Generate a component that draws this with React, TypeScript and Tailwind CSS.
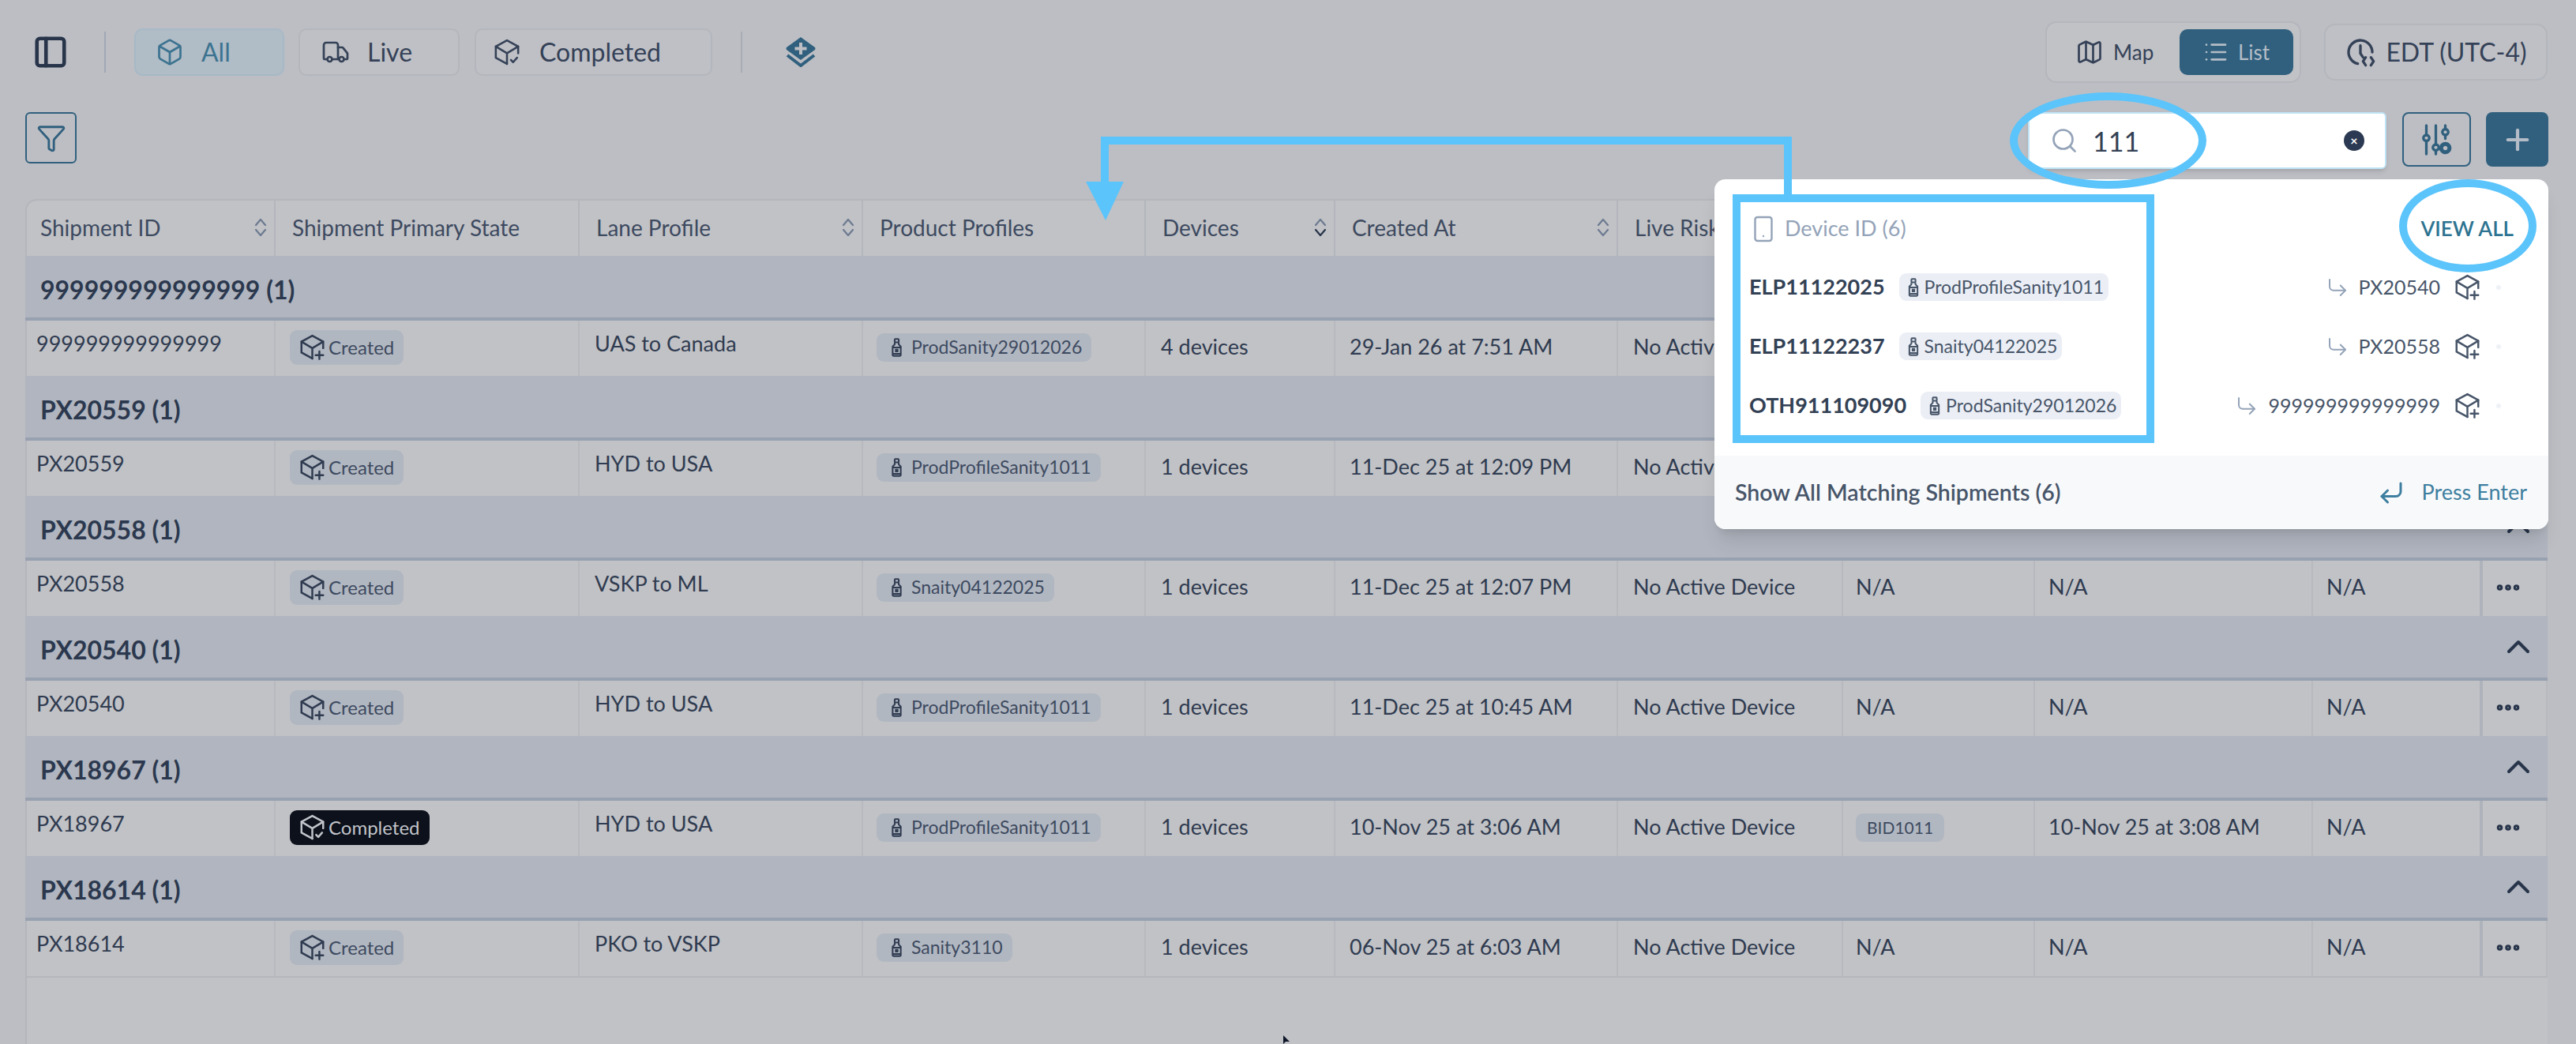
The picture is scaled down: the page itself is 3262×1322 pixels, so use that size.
import React from "react";
import { PanelLeft, Truck, Map as MapIcon, List, Funnel, Search, Plus, ChevronUp, Ellipsis, Smartphone, CornerDownLeft, CornerDownRight, Box } from "lucide-react";

const font = "font-['Lato','Noto_Sans',sans-serif]";
const cols = "grid grid-cols-[317px_385px_359px_358px_240px_358px_285px_243px_352px_215px_82px]";

function Cube({ kind, className }: { kind: "plus" | "check"; className?: string }) {
  return (
    <svg viewBox="0 0 24 24" fill="none" stroke="currentColor" strokeWidth={1.8} strokeLinecap="round" strokeLinejoin="round" className={className}>
      <path d="M22 13V7L12 1.500 2 7v10l10 5.500" />
      <path d="M2 7l10 6 10-6M12 13v9.500" />
      {kind === "plus" ? <path d="M18.500 16v7M15 19.500h7" /> : <path d="M15.500 19l2 2 3.500-4" />}
    </svg>
  );
}

function Bottle({ className }: { className?: string }) {
  return (
    <svg viewBox="0 0 16 28" fill="none" stroke="currentColor" strokeWidth={2.4} className={className}>
      <rect x="5" y="1.500" width="6" height="5" rx="1" />
      <path d="M5 7v2.500L2 12.500V25a1.500 1.500 0 0 0 1.500 1.500h9A1.500 1.500 0 0 0 14 25V12.500L11 9.500V7" />
      <rect x="5.500" y="16" width="5" height="5" fill="currentColor" stroke="none" />
      <path d="M2 14h12M2 23.500h12" />
    </svg>
  );
}

function Sort({ active }: { active?: boolean }) {
  return (
    <svg viewBox="0 0 18 24" fill="none" strokeWidth={2.2} strokeLinecap="round" strokeLinejoin="round" className="w-[18px] h-[24px]">
      <path d="M3 9l6-7 6 7" stroke="#6c7a90" />
      <path d="M3 15l6 7 6-7" stroke={active ? "#27344a" : "#6c7a90"} />
    </svg>
  );
}

function Header({ label, sort, active, first }: { label: string; sort?: boolean; active?: boolean; first?: boolean }) {
  return (
    <div className={(first ? "pl-[19px]" : "pl-[21px]") + " h-[70px] pb-[3px] flex items-center justify-between pr-[8px] border-r-2 border-[#b3b6bc] text-[28px] text-[#3d4a60]"}>
      <span>{label}</span>
      {sort && <Sort active={active} />}
    </div>
  );
}

const cell = "h-[70px] flex items-center border-r-2 border-[#b7b9be] text-[27px] text-[#2f3b50]";

type Row = {
  id: string; state: "Created" | "Completed"; lane: string; profile: string; devices: string; created: string;
  c8?: string; c9?: string; hidden?: boolean;
};

const rows: Row[] = [
  { id: "999999999999999", state: "Created", lane: "UAS to Canada", profile: "ProdSanity29012026", devices: "4 devices", created: "29-Jan 26 at 7:51 AM", hidden: true },
  { id: "PX20559", state: "Created", lane: "HYD to USA", profile: "ProdProfileSanity1011", devices: "1 devices", created: "11-Dec 25 at 12:09 PM", hidden: true },
  { id: "PX20558", state: "Created", lane: "VSKP to ML", profile: "Snaity04122025", devices: "1 devices", created: "11-Dec 25 at 12:07 PM" },
  { id: "PX20540", state: "Created", lane: "HYD to USA", profile: "ProdProfileSanity1011", devices: "1 devices", created: "11-Dec 25 at 10:45 AM" },
  { id: "PX18967", state: "Completed", lane: "HYD to USA", profile: "ProdProfileSanity1011", devices: "1 devices", created: "10-Nov 25 at 3:06 AM", c8: "BID1011", c9: "10-Nov 25 at 3:08 AM" },
  { id: "PX18614", state: "Created", lane: "PKO to VSKP", profile: "Sanity3110", devices: "1 devices", created: "06-Nov 25 at 6:03 AM" },
];

function Group({ r }: { r: Row }) {
  return (
    <div>
      <div className="h-[82px] bg-[#b0b5bf] flex items-center justify-between pt-[7px] pl-[19px] pr-[13px] border-b-[4px] border-[#98a1b0]">
        <span className="text-[32px] font-bold text-[#2b384e]">{r.id} (1)</span>
        <ChevronUp className="w-[48px] h-[48px] -mt-[8px] text-[#27344a]" strokeWidth={2} />
      </div>
      <div className={cols}>
        <div className={cell + " pl-[14px] pb-[12px]"}>{r.id}</div>
        <div className={cell + " pl-[18px] pb-[3px]"}>
          {r.state === "Created" ? (
            <span className="h-[44px] px-[12px] rounded-[9px] bg-[#b1b7c1] flex items-center gap-[4px] text-[24px] text-[#3d4a60]">
              <Cube kind="plus" className="w-[33px] h-[33px] text-[#2f3b50]" />Created
            </span>
          ) : (
            <span className="h-[44px] px-[12px] rounded-[9px] bg-[#0c111b] flex items-center gap-[4px] text-[24px] text-[#c1c4ca]">
              <Cube kind="check" className="w-[33px] h-[33px]" />Completed
            </span>
          )}
        </div>
        <div className={cell + " pl-[19px] pb-[12px]"}>{r.lane}</div>
        <div className={cell + " pl-[17px] pb-[3px]"}>
          <span className="h-[36px] pl-[18px] pr-[12px] rounded-[9px] bg-[#b1b7c1] flex items-center gap-[11px] text-[23px] text-[#3d4a60]">
            <Bottle className="w-[15px] h-[24px] text-[#2f3b50]" />{r.profile}
          </span>
        </div>
        <div className={cell + " pl-[19px] pb-[3px]"}>{r.devices}</div>
        <div className={cell + " pl-[18px] pb-[3px]"}>{r.created}</div>
        <div className={cell + " pl-[19px] pb-[3px]"}>
          <span className={r.hidden ? "w-[103px] overflow-hidden whitespace-nowrap" : ""}>No Active Device</span>
        </div>
        <div className={cell + " pl-[16px] pb-[3px]"}>
          {r.hidden ? null : r.c8 ? <span className="h-[36px] px-[14px] rounded-[9px] bg-[#b1b7c1] flex items-center text-[21px] text-[#3d4a60]">{r.c8}</span> : "N/A"}
        </div>
        <div className={cell + " pl-[17px] pb-[3px]"}>{r.hidden ? null : r.c9 ?? "N/A"}</div>
        <div className={cell + " pl-[17px] pb-[3px] border-r-[4px] border-r-[#aeb3bb]"}>{r.hidden ? null : "N/A"}</div>
        <div className={cell + " pl-[14px] pb-[3px] border-r-0"}>
          <Ellipsis className="w-[36px] h-[36px] text-[#27344a]" strokeWidth={3} />
        </div>
      </div>
    </div>
  );
}

function PopRow({ id, tag, ship }: { id: string; tag: string; ship: string }) {
  return (
    <div className="h-[75px] flex items-center justify-between pl-[44px] pr-[60px]">
      <div className="flex items-center gap-[18px]">
        <span className="text-[27px] font-bold text-[#334155]">{id}</span>
        <span className="h-[35px] pl-[11px] pr-[6px] rounded-[9px] bg-[#ebeef5] flex items-center gap-[7px] text-[23px] text-[#475569]">
          <Bottle className="w-[14px] h-[24px] text-[#475569]" />{tag}
        </span>
      </div>
      <div className="flex items-center text-[#475569]">
        <CornerDownRight className="w-[30px] h-[30px] text-[#94a3b8] mr-[12px]" strokeWidth={1.6} />
        <span className="text-[25px]">{ship}</span>
        <Cube kind="plus" className="w-[33px] h-[33px] ml-[18px]" />
        <span className="ml-[20px] w-[6px] h-[6px] rounded-full bg-[#eef1f6]" />
      </div>
    </div>
  );
}

export default function App() {
  return (
    <div className={"w-[3262px] h-[1322px] bg-[#bdbec3] relative overflow-hidden " + font}>
      {/* top bar */}
      <div className="h-[132px] flex items-center pl-[41px] pr-[36px]">
        <PanelLeft className="w-[46px] h-[46px] text-[#27344a]" strokeWidth={2.4} />
        <div className="w-[2px] h-[52px] bg-[#a0a9b6] ml-[45px] mr-[36px]" />
        <div className="w-[190px] h-[60px] rounded-[10px] bg-[#b0bcc6] border-2 border-[#a7b9c7] flex items-center pl-[25px] gap-[22px] text-[32px] text-[#3c7390]">
          <Box className="w-[36px] h-[36px]" strokeWidth={1.8} />All
        </div>
        <div className="ml-[18px] w-[204px] h-[60px] rounded-[10px] border-2 border-[#b3b6bd] bg-[#bfc0c5] flex items-center pl-[27px] gap-[22px] text-[32px] text-[#344157]">
          <Truck className="w-[36px] h-[36px]" strokeWidth={1.8} />Live
        </div>
        <div className="ml-[19px] w-[301px] h-[60px] rounded-[10px] border-2 border-[#b3b6bd] bg-[#bfc0c5] flex items-center pl-[22px] gap-[24px] text-[32px] text-[#344157]">
          <Cube kind="check" className="w-[34px] h-[34px]" />Completed
        </div>
        <div className="w-[2px] h-[52px] bg-[#a8adb6] ml-[36px] mr-[54px]" />
        <svg viewBox="0 0 40 38" className="w-[40px] h-[38px]">
          <path d="M20 0l18 13a3 3 0 0 1 0 3L20 29 2 16a3 3 0 0 1 0-3z" fill="#30607e" />
          <path d="M20 7v15M12.500 14.500h15" stroke="#bdbec3" strokeWidth="4" />
          <path d="M3 23l17 13 17-13" fill="none" stroke="#30607e" strokeWidth="4" />
        </svg>
        <div className="ml-auto w-[324px] h-[78px] rounded-[14px] border-2 border-[#b3b6bd] bg-[#c1c2c6] flex items-center justify-between pl-[36px] pr-[8px] mr-[29px]">
          <div className="flex items-center gap-[12px] text-[26px] text-[#344157]">
            <MapIcon className="w-[36px] h-[36px]" strokeWidth={1.8} />Map
          </div>
          <div className="w-[144px] h-[58px] rounded-[10px] bg-[#30607e] flex items-center justify-center gap-[12px] text-[26px] text-[#b4bdc7]">
            <List className="w-[32px] h-[32px]" strokeWidth={2} />List
          </div>
        </div>
        <div className="w-[283px] h-[72px] rounded-[14px] border-2 border-[#b3b6bd] bg-[#bfc0c5] flex items-center justify-center gap-[12px] text-[32px] text-[#344157]">
          <svg viewBox="0 0 24 24" fill="none" stroke="currentColor" strokeWidth="2" strokeLinecap="round" strokeLinejoin="round" className="w-[40px] h-[40px]">
            <path d="M12 7v6l2 3M21 12a9 9 0 1 0-11 8.800" />
            <path d="M16 16l-2 3 2 3M20 16l2 3-2 3" />
          </svg>
          EDT (UTC-4)
        </div>
      </div>

      {/* filter row */}
      <div className="h-[120px] flex items-start pl-[32px] pr-[35px] pt-[10px]">
        <div className="w-[65px] h-[65px] rounded-[6px] border-2 border-[#30607e] flex items-center justify-center">
          <Funnel className="w-[38px] h-[38px] text-[#30607e]" strokeWidth={1.8} />
        </div>
        <div className="ml-auto w-[454px] h-[72px] rounded-[6px] bg-white border-2 border-[#bfe3f5] flex items-center pl-[26px] pr-[26px] shadow-md">
          <Search className="w-[36px] h-[36px] text-[#94a3b8]" strokeWidth={1.8} />
          <span className="ml-[18px] text-[34px] text-[#334155]">111</span>
          <span className="ml-auto w-[26px] h-[26px] rounded-full bg-[#2b3a52] text-white text-[16px] font-bold flex items-center justify-center">×</span>
        </div>
        <div className="ml-[20px] w-[87px] h-[69px] rounded-[8px] border-2 border-[#30607e] flex items-center justify-center">
          <svg viewBox="0 0 28 28" fill="none" stroke="#30607e" strokeWidth="2.200" strokeLinecap="round" className="w-[42px] h-[42px]">
            <path d="M5 2v8M5 15v11M13 2v16M13 23v3M21 2v3M21 10v3" />
            <circle cx="5" cy="12.500" r="2.500" /><circle cx="13" cy="20.500" r="2.500" /><circle cx="21" cy="7.500" r="2.500" />
            <circle cx="21" cy="21" r="3.500" strokeWidth="3.400" strokeDasharray="2 1.200" />
          </svg>
        </div>
        <div className="ml-[19px] w-[79px] h-[69px] rounded-[8px] bg-[#30607e] flex items-center justify-center">
          <Plus className="w-[42px] h-[42px] text-[#b4bdc7]" strokeWidth={2.4} />
        </div>
      </div>

      {/* table */}
      <div className="ml-[32px] w-[3194px] h-[1070px] bg-[#c1c2c6] border-t-2 border-[#b3b6bc] rounded-tl-[14px] shadow-[inset_2px_0_0_#b3b6bc]">
        <div className={cols}>
          <Header first label="Shipment ID" sort />
          <Header label="Shipment Primary State" />
          <Header label="Lane Profile" sort />
          <Header label="Product Profiles" />
          <Header label="Devices" sort active />
          <Header label="Created At" sort />
          <Header label="Live Risk" />
        </div>
        <div>
          {rows.map((r) => <Group key={r.id} r={r} />)}
        </div>
        <div className="h-[2px] bg-[#b3b6bc]" />
      </div>

      {/* popup */}
      <div className="absolute left-[2171px] top-[227px] w-[1056px] h-[443px] bg-white rounded-[14px] shadow-xl overflow-hidden flex flex-col">
        <div className="h-[125px] flex items-center justify-between pl-[44px] pr-[44px] shrink-0">
          <div className="flex items-center gap-[9px] text-[27px] text-[#94a3b8]">
            <Smartphone className="w-[36px] h-[36px]" strokeWidth={1.6} />Device ID (6)
          </div>
          <span className="text-[26px] font-semibold text-[#2d7391]">VIEW ALL</span>
        </div>
        <div className="-mt-[26px]">
          <PopRow id="ELP11122025" tag="ProdProfileSanity1011" ship="PX20540" />
          <PopRow id="ELP11122237" tag="Snaity04122025" ship="PX20558" />
          <PopRow id="OTH911109090" tag="ProdSanity29012026" ship="999999999999999" />
        </div>
        <div className="mt-auto h-[93px] bg-[#f8f9fb] flex items-center justify-between pl-[26px] pr-[27px] shrink-0">
          <span className="text-[28.5px] font-semibold text-[#475569]">Show All Matching Shipments (6)</span>
          <span className="flex items-center gap-[20px] text-[27px] text-[#3e7fa0]">
            <CornerDownLeft className="w-[36px] h-[36px]" strokeWidth={2} />Press Enter
          </span>
        </div>
      </div>

      {/* annotations */}
      <div className="absolute left-[2545px] top-[117px] w-[249px] h-[122px] rounded-[50%] border-[10px] border-[#5bc4fb]" />
      <div className="absolute left-[3038px] top-[227px] w-[174px] h-[118px] rounded-[50%] border-[10px] border-[#5bc4fb]" />
      <div className="absolute left-[2194px] top-[246px] w-[534px] h-[315px] border-[10px] border-[#5bc4fb]" />
      <svg className="absolute left-[1370px] top-[168px] w-[910px] h-[120px]" viewBox="0 0 910 120" fill="none">
        <path d="M894 78V10H29V64" stroke="#5bc4fb" strokeWidth="10" />
        <path d="M5 62h48L30 111z" fill="#5bc4fb" />
      </svg>
      <svg className="absolute left-[1624px] top-[1311px] w-[10px] h-[12px]" viewBox="0 0 10 12">
        <path d="M1 0v11l3-3h5z" fill="#0f172a" />
      </svg>
    </div>
  );
}
